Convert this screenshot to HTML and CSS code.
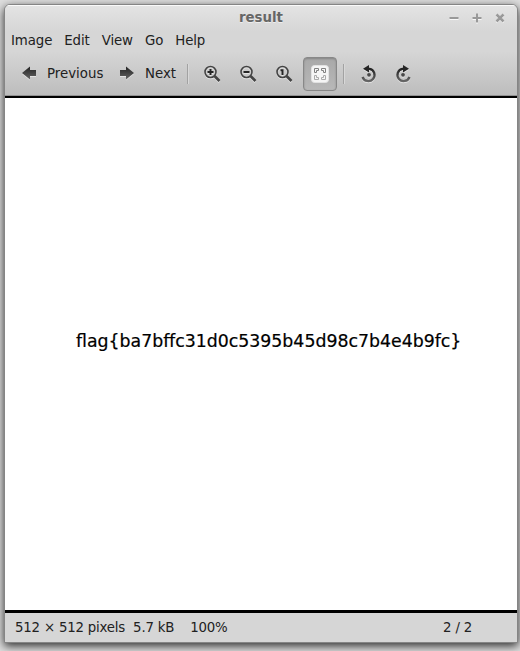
FILE: index.html
```
<!DOCTYPE html>
<html lang="en">
<head>
<meta charset="utf-8">
<title>result</title>
<link rel="stylesheet" href="styles.css">
</head>
<body>
<main class="window">
  <header class="chrome">
    <div class="titlebar">
      <h1 class="title">result</h1>
      <div class="controls">
        <svg width="60" height="16" viewBox="0 0 60 16">
          <g fill="none" stroke="#fff" stroke-opacity=".8" stroke-width="2" transform="translate(0 1)"><path d="M2.500 8h9M25.500 8h9M30 3.500v9"/><path d="M49.500 4.500l7 7M56.500 4.500l-7 7"/></g>
          <g fill="none" stroke="#999" stroke-width="2"><path d="M2.500 8h9M25.500 8h9M30 3.500v9"/><path stroke-width="2.500" d="M49.500 4.500l7 7M56.500 4.500l-7 7"/></g>
        </svg>
      </div>
    </div>
    <nav class="menubar"><span>Image</span><span>Edit</span><span>View</span><span>Go</span><span>Help</span></nav>
    <div class="toolbar">
      <button class="nav prev"><svg class="icon" width="16" height="16" viewBox="0 0 16 16"><path fill="url(#ink)" d="M1 8L9 1.500v3.500h6v6H9v3.500z"/></svg><span>Previous</span></button>
      <button class="nav next"><svg class="icon" width="16" height="16" viewBox="0 0 16 16"><path fill="url(#ink)" d="M15 8L7 1.500v3.500H1v6h6v3.500z"/></svg><span>Next</span></button>
      <i class="separator"></i>
      <button class="tool"><svg class="icon" width="18" height="18" viewBox="0 0 18 18"><g class="lens"><circle cx="7.500" cy="7" r="5.500"/><path class="handle" d="M11.500 11l5 5"/><path class="sign" d="M4.500 7h6M7.500 4v6"/></g></svg></button>
      <button class="tool"><svg class="icon" width="18" height="18" viewBox="0 0 18 18"><g class="lens"><circle cx="7.500" cy="7" r="5.500"/><path class="handle" d="M11.500 11l5 5"/><path class="sign" d="M4.500 7h6"/></g></svg></button>
      <button class="tool"><svg class="icon" width="18" height="18" viewBox="0 0 18 18"><g class="lens"><circle cx="7.500" cy="7" r="5.500"/><path class="handle" d="M11.500 11l5 5"/><path class="sign" d="M5.500 5.200h2v4.800"/></g></svg></button>
      <button class="tool active"><svg width="18" height="18" viewBox="0 0 18 18"><rect x=".5" y=".5" width="17" height="17" rx="3" fill="#f5f5f5" stroke="#e2e2e2"/><g fill="none" stroke="#808080" stroke-width="1"><path d="M3.500 7.500v-4h4v2h-2v2zM14.500 7.500v-4h-4v2h2v2z"/><path stroke="#aaa" d="M3.500 10.500v4h4v-2h-2v-2zM14.500 10.500v4h-4v-2h2v-2z"/></g></svg></button>
      <i class="separator short"></i>
      <button class="tool rotate"><svg class="icon" width="18" height="18" viewBox="0 0 18 18"><use href="#turn"/></svg></button>
      <button class="tool rotate"><svg class="icon" width="18" height="18" viewBox="0 0 18 18"><use href="#turn" transform="matrix(-1 0 0 1 18 0)"/></svg></button>
    </div>
  </header>
  <section class="canvas"><p class="flag">flag{ba7bffc31d0c5395b45d98c7b4e4b9fc}</p></section>
  <footer class="status"><span class="size">512 × 512 pixels&nbsp; 5.7 kB</span><span class="zoom">100%</span><span class="count">2 / 2</span></footer>
</main>
<svg class="defs" width="0" height="0">
  <defs>
    <linearGradient id="ink" x1="0" y1="0" x2="0" y2="1"><stop offset="0" stop-color="#222"/><stop offset="1" stop-color="#666"/></linearGradient>
    <g id="turn"><path fill="none" stroke="url(#ink)" stroke-width="2.300" d="M8 3.800h1.500a6.200 6.200 0 1 1-7 8.200"/><path fill="#262626" d="M3 3.800L9 0v7.600z"/><circle cx="9" cy="9.800" r="1.900" fill="#484848"/></g>
  </defs>
</svg>
</body>
</html>
```
FILE: styles.css
```
* { box-sizing: border-box; }
html { height: 100%; overflow: hidden; background: #dedede; }
body {
  margin: 0;
  height: 651px;
  padding: 4px 2px 8px 4px;
  overflow: hidden;
  background: #dedede;
  font: 13.333px/16px "DejaVu Sans", sans-serif;
  color: #212121;
}
.window {
  display: flex;
  flex-direction: column;
  width: 514px;
  height: 639px;
  border: 1px solid #858585;
  border-radius: 6px 6px 0 0;
  overflow: hidden;
  background: #d6d6d6;
  box-shadow: 0 3px 10px rgba(0, 0, 0, .8);
}
.chrome {
  height: 91px;
  flex: none;
  border-bottom: 1px solid #929292;
  background: linear-gradient(#e4e4e4, #d6d6d6 26px, #d6d6d6 46px, #bdbdbd);
  box-shadow: inset 0 1px #fafafa;
}
.titlebar { display: grid; height: 25px; align-items: center; }
.title, .controls { grid-area: 1 / 1; }
.title { margin: 0; text-align: center; font-size: 13.333px; line-height: 16px; color: #666; text-shadow: 0 1px #eee; }
.controls { justify-self: end; height: 16px; margin-right: 10px; }
.controls svg, .icon { display: block; }
.menubar { display: flex; gap: 12px; height: 20px; padding: 3px 6px; letter-spacing: -.1px; }
.toolbar { display: flex; align-items: center; height: 45px; padding-left: 16px; }
button { appearance: none; display: flex; align-items: center; border: 0; margin: 0; padding: 0; background: none; color: inherit; font: inherit; }
.icon { filter: drop-shadow(0 1px 0 rgba(255, 255, 255, .5)); }
.nav { gap: 10px; }
.nav span { padding-top: 2px; }
.nav.prev { width: 98px; }
.nav.next { width: 68px; }
.separator { width: 2px; height: 20px; margin-top: 2px; border-left: 1px solid #a2a2a2; border-right: 1px solid #d8d8d8; }
.tool { width: 34px; height: 34px; margin: 2px 2px 0 0; justify-content: center; flex: none; }
.separator + .tool { margin-left: 6px; }
.tool.active { border: 1px solid #888; border-radius: 4px; background: linear-gradient(#a8a8a8, #b8b8b8); box-shadow: inset 0 1px 2px #858585; margin-right: 6px; }
.separator.short + .tool { margin-left: 7px; }
.tool.rotate { margin-right: 0; }
.lens { fill: none; stroke: #444; stroke-width: 1.6; }
.handle { stroke-width: 2.6; }
.sign { stroke: #252525; stroke-width: 2; }
.canvas { display: flex; flex: none; height: 517px; border-top: 2px solid #000; border-bottom: 3px solid #000; background: #fff; }
.flag { margin: 233px 0 0 71px; font-size: 17.333px; line-height: 21px; letter-spacing: 0; color: #000; white-space: nowrap; -webkit-text-stroke: .2px #000; }
.status { display: flex; height: 29px; padding: 7px 10px 6px; letter-spacing: -.2px; }
.zoom { margin-left: 16px; }
.count { margin-left: auto; margin-right: 35px; }
.defs { position: absolute; }
```
